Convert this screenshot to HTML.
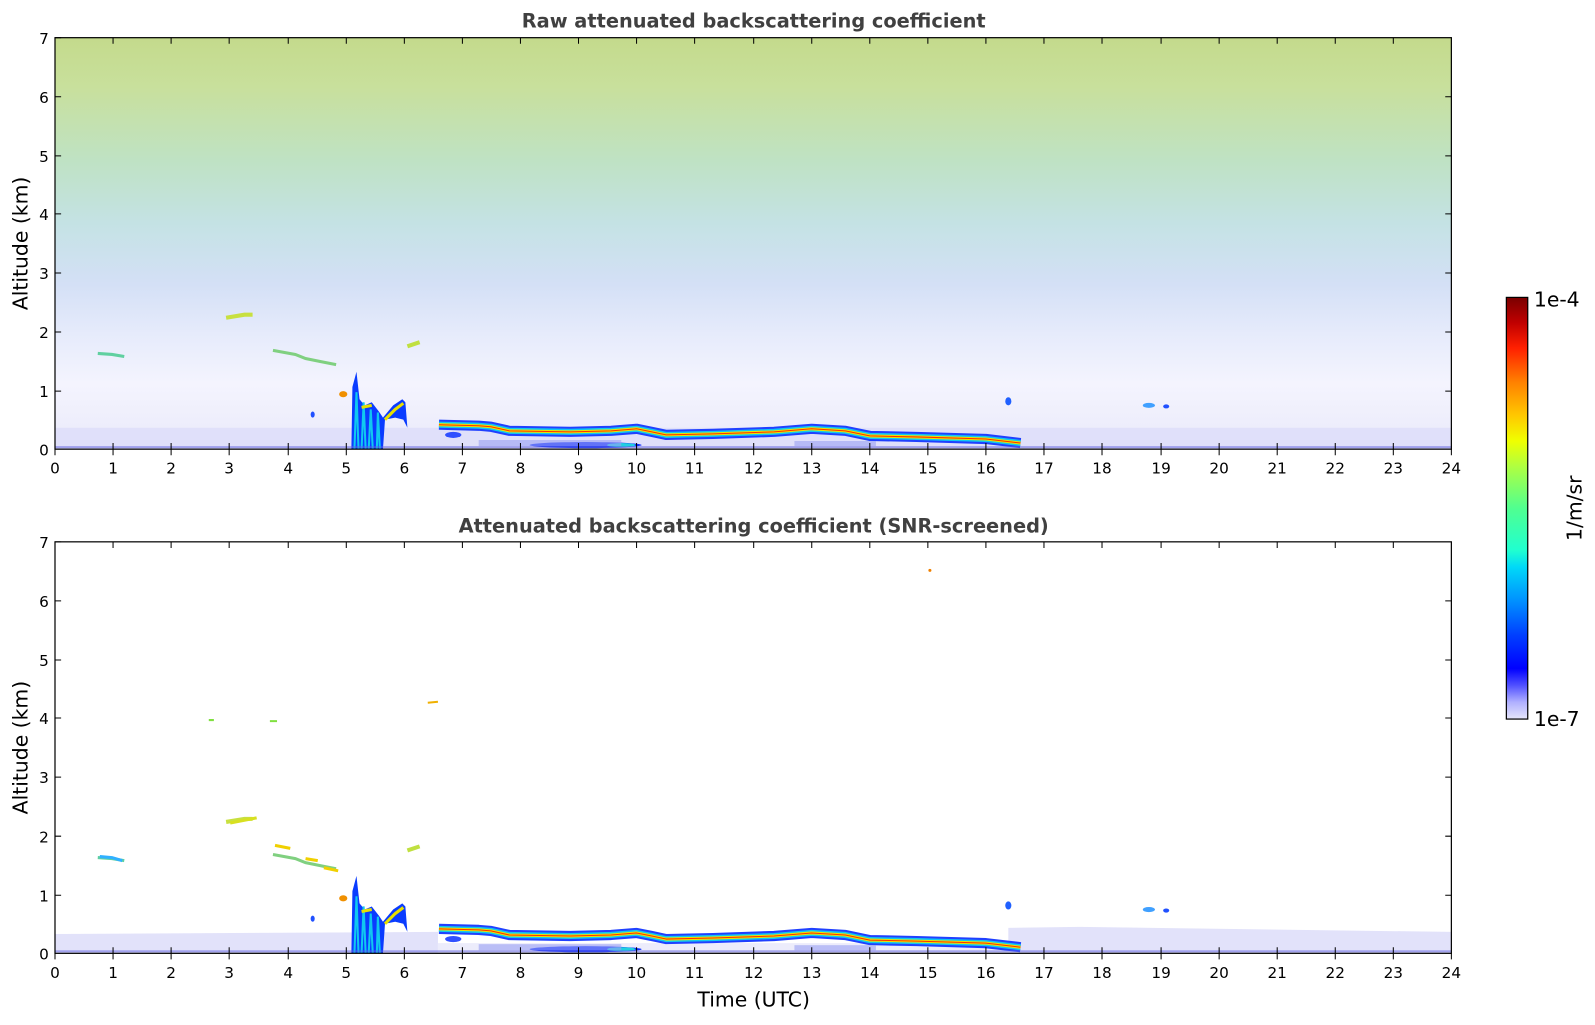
<!DOCTYPE html>
<html><head><meta charset="utf-8"><style>
html,body{margin:0;padding:0;background:#fff}
svg text{font-family:"DejaVu Sans","Liberation Sans",sans-serif;fill:#000}
</style></head><body>
<svg width="1595" height="1020" viewBox="0 0 1595 1020" xmlns="http://www.w3.org/2000/svg">
<defs>
<linearGradient id="bg1" x1="0" y1="0" x2="0" y2="1">
<stop offset="0" stop-color="#c4da8c"/>
<stop offset="0.12" stop-color="#c8e09c"/>
<stop offset="0.3" stop-color="#bfe2c4"/>
<stop offset="0.45" stop-color="#c4e2e4"/>
<stop offset="0.6" stop-color="#d4e0f6"/>
<stop offset="0.72" stop-color="#e6ebfb"/>
<stop offset="0.84" stop-color="#f4f4fe"/>
<stop offset="0.92" stop-color="#efeffc"/>
<stop offset="1" stop-color="#e8e8fa"/>
</linearGradient>
<linearGradient id="cb" x1="0" y1="1" x2="0" y2="0">
<stop offset="0" stop-color="#e6e6fa"/>
<stop offset="0.04" stop-color="#b0b0ff"/>
<stop offset="0.08" stop-color="#5050ff"/>
<stop offset="0.12" stop-color="#0000ff"/>
<stop offset="0.2" stop-color="#0040ff"/>
<stop offset="0.28" stop-color="#0090ff"/>
<stop offset="0.36" stop-color="#00d8f8"/>
<stop offset="0.4" stop-color="#20ffd0"/>
<stop offset="0.5" stop-color="#50ff90"/>
<stop offset="0.6" stop-color="#b0ff40"/>
<stop offset="0.66" stop-color="#f0ff00"/>
<stop offset="0.72" stop-color="#ffc800"/>
<stop offset="0.8" stop-color="#ff8000"/>
<stop offset="0.88" stop-color="#ff2000"/>
<stop offset="0.94" stop-color="#c00000"/>
<stop offset="1" stop-color="#7a0000"/>
</linearGradient>
<g id="feat">
<path d="M431 417 L470 418 L482 419 L500 423 L560 424 L600 423 L625 421 L640 424 L654 427 L700 426 L760 424 L797 421 L830 423 L854 428 L900 429 L968 431 L1002 435" fill="none" stroke="#2040ff" stroke-width="10" stroke-linejoin="round"/>
<path d="M431 417 L470 418 L482 419 L500 423 L560 424 L600 423 L625 421 L640 424 L654 427 L700 426 L760 424 L797 421 L830 423 L854 428 L900 429 L968 431 L1002 435" fill="none" stroke="#10c8f0" stroke-width="6" stroke-linejoin="round"/>
<path d="M431 417 L470 418 L482 419 L500 423 L560 424 L600 423 L625 421 L640 424 L654 427 L700 426 L760 424 L797 421 L830 423 L854 428 L900 429 L968 431 L1002 435" fill="none" stroke="#f0e000" stroke-width="3" stroke-linejoin="round"/>
<path d="M431 417 L470 418 L482 419 L500 423 L560 424 L600 423 L625 421 L640 424 L654 427 L700 426 L760 424 L797 421 L830 423 L854 428 L900 429 L968 431 L1002 435" fill="none" stroke="#ff3000" stroke-width="1" stroke-linejoin="round"/>
<ellipse cx="575" cy="437" rx="55" ry="3" fill="#1030ff"/>
<ellipse cx="610" cy="437" rx="14" ry="2" fill="#20d0e0"/>
<ellipse cx="445" cy="427" rx="8" ry="3" fill="#3050ff"/>
<rect x="470" y="432" width="140" height="6" fill="#9aa0f4" opacity="0.6"/>
<rect x="780" y="433" width="80" height="5" fill="#9aa0f4" opacity="0.6"/>
<path d="M345 441 L346 380 L350 365 L353 392 L358 398 L365 395 L372 404 L376 410 L386 398 L395 392 L398 395 L400 420 L396 412 L388 410 L378 412 L376 441 Z" fill="#0a3cff"/>
<path d="M348 441 L350 385 L352 441 M355 441 L357 395 L359 441 M362 441 L364 402 L366 441 M370 441 L371 405 L373 441" stroke="#10c8f0" stroke-width="2" fill="none"/>
<path d="M378 412 L388 402 L396 396" stroke="#e8e000" stroke-width="3" fill="none"/>
<path d="M355 400 L365 398" stroke="#e8e000" stroke-width="3" fill="none"/>
<path d="M222 312 L240 309 L248 309" stroke="#c8e040" stroke-width="4" fill="none"/>
<path d="M96 347 L110 348 L122 350" stroke="#60d0a0" stroke-width="3" fill="none"/>
<path d="M268 344 L290 348 L300 352 L315 355 L330 358" stroke="#80d080" stroke-width="3" fill="none"/>
<path d="M400 340 L412 336" stroke="#c0e040" stroke-width="4" fill="none"/>
<ellipse cx="337" cy="387" rx="4" ry="3" fill="#f09000"/>
<ellipse cx="307" cy="407" rx="2" ry="3" fill="#2050ff"/>
<ellipse cx="990" cy="394" rx="3" ry="4" fill="#2060ff"/>
<ellipse cx="1128" cy="398" rx="6" ry="2.5" fill="#40a0ff"/>
<ellipse cx="1145" cy="399" rx="3" ry="2" fill="#2050ff"/>
<rect x="54" y="438" width="1371" height="2" fill="#6060e0" opacity="0.5"/>
</g>
</defs>
<g transform="scale(1.0185)">
<text x="740" y="27" text-anchor="middle" font-size="19" font-weight="bold" style="fill:#404040">Raw attenuated backscattering coefficient</text>
<rect x="54" y="37" width="1371" height="404" fill="url(#bg1)"/>
<rect x="54" y="420" width="1371" height="21" fill="#e0e0fa"/>
<use href="#feat"/>
<rect x="54" y="37" width="1371" height="404" fill="none" stroke="#000" stroke-width="1.2"/>

<text x="740" y="523" text-anchor="middle" font-size="19" font-weight="bold" style="fill:#404040">Attenuated backscattering coefficient (SNR-screened)</text>
<rect x="54" y="532" width="1371" height="404" fill="#fff"/>
<path d="M54 917 L430 915 L430 936 L54 936 Z" fill="#e2e2fa"/>
<path d="M990 911 L1060 910 L1425 915 L1425 936 L990 936 Z" fill="#e2e2fa"/>
<rect x="430" y="926" width="570" height="10" fill="#ececfb"/>
<g transform="translate(0,495)"><use href="#feat"/></g>
<path d="M226 808 L252 803" stroke="#d8e020" stroke-width="3" fill="none"/>
<path d="M420 690 L430 689" stroke="#f0b000" stroke-width="2" fill="none"/>
<path d="M205 707 L210 707 M265 708 L272 708" stroke="#80e040" stroke-width="2" fill="none"/>
<path d="M98 841 L110 842 L120 845" stroke="#30b0ff" stroke-width="3" fill="none"/>
<path d="M270 830 L285 833 M300 843 L312 845 M318 852 L332 855" stroke="#f0d000" stroke-width="3" fill="none"/>
<ellipse cx="913" cy="560" rx="1.5" ry="1.5" fill="#f08000"/>
<rect x="54" y="532" width="1371" height="404" fill="none" stroke="#000" stroke-width="1.2"/>

<g stroke="#000" stroke-width="1">
<path d="M54 37h6M54 95h6M54 153h6M54 210h6M54 268h6M54 326h6M54 384h6M1425 95h-6M1425 153h-6M1425 210h-6M1425 268h-6M1425 326h-6M1425 384h-6"/>
<path d="M54 532h6M54 590h6M54 648h6M54 705h6M54 763h6M54 821h6M54 879h6M1425 590h-6M1425 648h-6M1425 705h-6M1425 763h-6M1425 821h-6M1425 879h-6"/>
<path d="M111 441v-6M168 441v-6M225 441v-6M283 441v-6M340 441v-6M397 441v-6M454 441v-6M511 441v-6M568 441v-6M625 441v-6M682 441v-6M740 441v-6M797 441v-6M854 441v-6M911 441v-6M968 441v-6M1025 441v-6M1082 441v-6M1140 441v-6M1197 441v-6M1254 441v-6M1311 441v-6M1368 441v-6"/>
<path d="M111 936v-6M168 936v-6M225 936v-6M283 936v-6M340 936v-6M397 936v-6M454 936v-6M511 936v-6M568 936v-6M625 936v-6M682 936v-6M740 936v-6M797 936v-6M854 936v-6M911 936v-6M968 936v-6M1025 936v-6M1082 936v-6M1140 936v-6M1197 936v-6M1254 936v-6M1311 936v-6M1368 936v-6"/>
<path d="M111 37v6M168 37v6M225 37v6M283 37v6M340 37v6M397 37v6M454 37v6M511 37v6M568 37v6M625 37v6M682 37v6M740 37v6M797 37v6M854 37v6M911 37v6M968 37v6M1025 37v6M1082 37v6M1140 37v6M1197 37v6M1254 37v6M1311 37v6M1368 37v6"/>
<path d="M111 532v6M168 532v6M225 532v6M283 532v6M340 532v6M397 532v6M454 532v6M511 532v6M568 532v6M625 532v6M682 532v6M740 532v6M797 532v6M854 532v6M911 532v6M968 532v6M1025 532v6M1082 532v6M1140 532v6M1197 532v6M1254 532v6M1311 532v6M1368 532v6"/>
<path d="M54 441v6M111 441v6M168 441v6M225 441v6M283 441v6M340 441v6M397 441v6M454 441v6M511 441v6M568 441v6M625 441v6M682 441v6M740 441v6M797 441v6M854 441v6M911 441v6M968 441v6M1025 441v6M1082 441v6M1140 441v6M1197 441v6M1254 441v6M1311 441v6M1368 441v6M1425 441v6"/>
<path d="M54 936v6M111 936v6M168 936v6M225 936v6M283 936v6M340 936v6M397 936v6M454 936v6M511 936v6M568 936v6M625 936v6M682 936v6M740 936v6M797 936v6M854 936v6M911 936v6M968 936v6M1025 936v6M1082 936v6M1140 936v6M1197 936v6M1254 936v6M1311 936v6M1368 936v6M1425 936v6"/>
</g>
<g font-size="15" text-anchor="end">
<text x="48" y="43">7</text><text x="48" y="101">6</text><text x="48" y="159">5</text><text x="48" y="216">4</text><text x="48" y="274">3</text><text x="48" y="332">2</text><text x="48" y="390">1</text><text x="48" y="447">0</text>
<text x="48" y="538">7</text><text x="48" y="596">6</text><text x="48" y="654">5</text><text x="48" y="711">4</text><text x="48" y="769">3</text><text x="48" y="827">2</text><text x="48" y="885">1</text><text x="48" y="942">0</text>
</g>
<g font-size="15" text-anchor="middle">
<text x="54" y="465">0</text><text x="111" y="465">1</text><text x="168" y="465">2</text><text x="225" y="465">3</text><text x="283" y="465">4</text><text x="340" y="465">5</text><text x="397" y="465">6</text><text x="454" y="465">7</text><text x="511" y="465">8</text><text x="568" y="465">9</text><text x="625" y="465">10</text><text x="682" y="465">11</text><text x="740" y="465">12</text><text x="797" y="465">13</text><text x="854" y="465">14</text><text x="911" y="465">15</text><text x="968" y="465">16</text><text x="1025" y="465">17</text><text x="1082" y="465">18</text><text x="1140" y="465">19</text><text x="1197" y="465">20</text><text x="1254" y="465">21</text><text x="1311" y="465">22</text><text x="1368" y="465">23</text><text x="1425" y="465">24</text>
<text x="54" y="960">0</text><text x="111" y="960">1</text><text x="168" y="960">2</text><text x="225" y="960">3</text><text x="283" y="960">4</text><text x="340" y="960">5</text><text x="397" y="960">6</text><text x="454" y="960">7</text><text x="511" y="960">8</text><text x="568" y="960">9</text><text x="625" y="960">10</text><text x="682" y="960">11</text><text x="740" y="960">12</text><text x="797" y="960">13</text><text x="854" y="960">14</text><text x="911" y="960">15</text><text x="968" y="960">16</text><text x="1025" y="960">17</text><text x="1082" y="960">18</text><text x="1140" y="960">19</text><text x="1197" y="960">20</text><text x="1254" y="960">21</text><text x="1311" y="960">22</text><text x="1368" y="960">23</text><text x="1425" y="960">24</text>
</g>
<text x="740" y="988" text-anchor="middle" font-size="20">Time (UTC)</text>
<text transform="translate(27,239) rotate(-90)" text-anchor="middle" font-size="20">Altitude (km)</text>
<text transform="translate(27,734) rotate(-90)" text-anchor="middle" font-size="20">Altitude (km)</text>

<rect x="1479" y="292" width="21" height="414" fill="url(#cb)" stroke="#000" stroke-width="1.2"/>
<text x="1506" y="301" font-size="20">1e-4</text>
<text x="1506" y="713" font-size="20">1e-7</text>
<text transform="translate(1553,499) rotate(-90)" text-anchor="middle" font-size="20">1/m/sr</text>
</g>
</svg>
</body></html>
